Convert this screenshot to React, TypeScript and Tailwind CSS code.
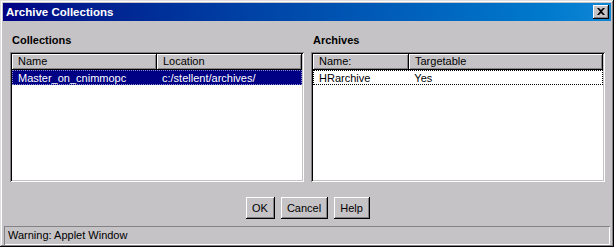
import React from "react";

const raised =
  "shadow-[inset_-1px_-1px_0_#000,inset_1px_1px_0_#fff,inset_-2px_-2px_0_#848284]";
const sunken =
  "shadow-[inset_1px_1px_0_#848284,inset_-1px_-1px_0_#fff,inset_2px_2px_0_#000,inset_-2px_-2px_0_#c6c3c6]";

interface Column {
  title: string;
  width: string;
}

function ListPanel({
  label,
  columns,
  row,
  selected,
}: {
  label: string;
  columns: Column[];
  row: string[];
  selected: boolean;
}) {
  return (
    <div className="w-[294px] flex flex-col">
      <div className="h-[14px] leading-[14px] font-bold text-[11px] pl-[2px] text-black">
        {label}
      </div>
      <div className={`mt-[5px] h-[130px] bg-white p-[2px] ${sunken}`}>
        {/* Header */}
        <div className="flex h-[16px]">
          {columns.map((col, i) => (
            <div
              key={i}
              className={`${col.width} h-[16px] bg-[#c6c3c6] ${raised} pl-[6px] leading-[15px] text-[11px] text-black`}
            >
              {col.title}
            </div>
          ))}
        </div>
        {/* Row */}
        <div
          className={`flex h-[15px] leading-[14px] text-[11px] border border-dotted ${
            selected
              ? "bg-[#000084] text-white border-[#8a8ad0]"
              : "bg-white text-black border-black"
          }`}
        >
          {row.map((cell, i) => (
            <div key={i} className={`${columns[i].width} pl-[5px]`}>
              {cell}
            </div>
          ))}
        </div>
      </div>
    </div>
  );
}

function Button({ label, width }: { label: string; width: string }) {
  return (
    <div
      className={`${width} h-[22px] bg-[#c6c3c6] ${raised} flex items-center justify-center text-[11px] text-black`}
    >
      {label}
    </div>
  );
}

export default function App() {
  return (
    <div
      className="w-[614px] h-[247px] bg-[#c6c3c6] flex flex-col pt-[3px] px-[3px] pb-[1px] overflow-hidden shadow-[inset_-1px_-1px_0_#000,inset_1px_1px_0_#dfdfdf,inset_-2px_-2px_0_#848284,inset_2px_2px_0_#fff]"
      style={{ fontFamily: '"Liberation Sans", Arial, sans-serif' }}
    >
      {/* Title bar */}
      <div className="h-[18px] flex items-center justify-between pl-[3px] pr-[2px] bg-gradient-to-r from-[#000084] to-[#1086d6]">
        <span className="text-white font-bold text-[11.5px] leading-[18px]">
          Archive Collections
        </span>
        <div
          className={`w-[16px] h-[14px] bg-[#c6c3c6] ${raised} flex items-center justify-center`}
        >
          <svg width="8" height="7" viewBox="0 0 8 7" className="-mt-[1px]">
            <path d="M0 0h2l2 2 2-2h2L5 3.5 8 7H6L4 5 2 7H0l3-3.5z" fill="#000" />
          </svg>
        </div>
      </div>

      {/* Body */}
      <div className="flex gap-[7px] pl-[7px] mt-[12px]">
        <ListPanel
          label="Collections"
          columns={[
            { title: "Name", width: "w-[145px]" },
            { title: "Location", width: "w-[145px]" },
          ]}
          row={["Master_on_cnimmopc", "c:/stellent/archives/"]}
          selected
        />
        <ListPanel
          label="Archives"
          columns={[
            { title: "Name:", width: "w-[96px]" },
            { title: "Targetable", width: "w-[194px]" },
          ]}
          row={["HRarchive", "Yes"]}
          selected={false}
        />
      </div>

      {/* Buttons */}
      <div className="flex justify-center gap-[6px] mt-[15px] pl-[1px]">
        <Button label="OK" width="w-[29px]" />
        <Button label="Cancel" width="w-[47px]" />
        <Button label="Help" width="w-[36px]" />
      </div>

      {/* Status bar */}
      <div className="mt-[7px] ml-[1px] mr-[1px] h-[19px] flex items-center pl-[4px] text-[11px] text-black shadow-[inset_1px_1px_0_#848284,inset_-1px_-1px_0_#fff]">
        Warning: Applet Window
      </div>
    </div>
  );
}
